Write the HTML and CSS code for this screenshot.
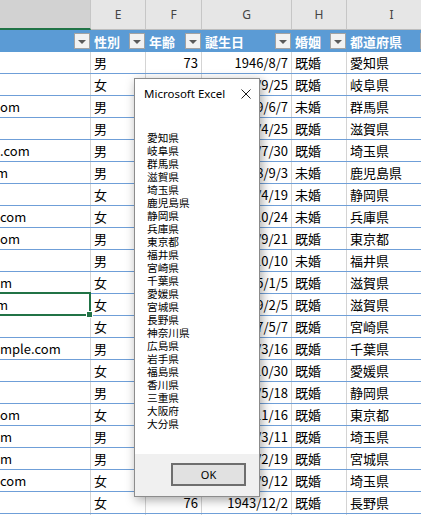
FILE: index.html
```html
<!DOCTYPE html>
<html lang="ja">
<head>
    <meta charset="UTF-8">
    <meta name="viewport" content="width=device-width, initial-scale=1.0">
    <title>会員リスト</title>
    <link rel="stylesheet" href="styles.css">
</head>
<body>
    <div class="sheet">
        <!-- column letters -->
        <div class="row col-heads">
            <div class="ch active"></div>
            <div class="ch">E</div>
            <div class="ch">F</div>
            <div class="ch">G</div>
            <div class="ch">H</div>
            <div class="ch">I</div>
        </div>

        <!-- table header with filter buttons -->
        <div class="row thead">
            <div class="th"><span></span><span class="filter"></span></div>
            <div class="th"><span>性別</span><span class="filter"></span></div>
            <div class="th"><span>年齢</span><span class="filter"></span></div>
            <div class="th"><span>誕生日</span><span class="filter"></span></div>
            <div class="th"><span>婚姻</span><span class="filter"></span></div>
            <div class="th"><span>都道府県</span><span class="filter"></span></div>
        </div>

        <div class="row"><div class="c mail"></div><div class="c">男</div><div class="c num">73</div><div class="c num">1946/8/7</div><div class="c">既婚</div><div class="c">愛知県</div></div>
        <div class="row"><div class="c mail"></div><div class="c">女</div><div class="c num">58</div><div class="c num">1961/9/25</div><div class="c">既婚</div><div class="c">岐阜県</div></div>
        <div class="row"><div class="c mail">om</div><div class="c">男</div><div class="c num">40</div><div class="c num">1979/6/7</div><div class="c">未婚</div><div class="c">群馬県</div></div>
        <div class="row"><div class="c mail"></div><div class="c">男</div><div class="c num">65</div><div class="c num">1954/4/25</div><div class="c">既婚</div><div class="c">滋賀県</div></div>
        <div class="row"><div class="c mail">.com</div><div class="c">男</div><div class="c num">48</div><div class="c num">1971/7/30</div><div class="c">既婚</div><div class="c">埼玉県</div></div>
        <div class="row"><div class="c mail cut">m</div><div class="c">男</div><div class="c num">31</div><div class="c num">1988/9/3</div><div class="c">未婚</div><div class="c">鹿児島県</div></div>
        <div class="row"><div class="c mail"></div><div class="c">女</div><div class="c num">27</div><div class="c num">1992/4/19</div><div class="c">未婚</div><div class="c">静岡県</div></div>
        <div class="row"><div class="c mail">com</div><div class="c">女</div><div class="c num">35</div><div class="c num">1984/10/24</div><div class="c">未婚</div><div class="c">兵庫県</div></div>
        <div class="row"><div class="c mail">om</div><div class="c">男</div><div class="c num">52</div><div class="c num">1967/9/21</div><div class="c">既婚</div><div class="c">東京都</div></div>
        <div class="row"><div class="c mail"></div><div class="c">男</div><div class="c num">29</div><div class="c num">1990/10/10</div><div class="c">未婚</div><div class="c">福井県</div></div>
        <div class="row"><div class="c mail">m</div><div class="c">女</div><div class="c num">44</div><div class="c num">1975/1/5</div><div class="c">既婚</div><div class="c">滋賀県</div></div>
        <div class="row"><div class="c mail cut">m</div><div class="c">女</div><div class="c num">50</div><div class="c num">1969/2/5</div><div class="c">既婚</div><div class="c">滋賀県</div></div>
        <div class="row"><div class="c mail"></div><div class="c">女</div><div class="c num">62</div><div class="c num">1957/5/7</div><div class="c">既婚</div><div class="c">宮崎県</div></div>
        <div class="row"><div class="c mail">mple.com</div><div class="c">男</div><div class="c num">56</div><div class="c num">1963/3/16</div><div class="c">既婚</div><div class="c">千葉県</div></div>
        <div class="row"><div class="c mail"></div><div class="c">女</div><div class="c num">38</div><div class="c num">1981/10/30</div><div class="c">既婚</div><div class="c">愛媛県</div></div>
        <div class="row"><div class="c mail"></div><div class="c">男</div><div class="c num">69</div><div class="c num">1950/5/18</div><div class="c">既婚</div><div class="c">静岡県</div></div>
        <div class="row"><div class="c mail">om</div><div class="c">女</div><div class="c num">41</div><div class="c num">1978/11/16</div><div class="c">既婚</div><div class="c">東京都</div></div>
        <div class="row"><div class="c mail">m</div><div class="c">男</div><div class="c num">47</div><div class="c num">1972/3/11</div><div class="c">既婚</div><div class="c">埼玉県</div></div>
        <div class="row"><div class="c mail">m</div><div class="c">男</div><div class="c num">53</div><div class="c num">1966/2/19</div><div class="c">既婚</div><div class="c">宮城県</div></div>
        <div class="row"><div class="c mail">com</div><div class="c">女</div><div class="c num">36</div><div class="c num">1983/9/12</div><div class="c">既婚</div><div class="c">埼玉県</div></div>
        <div class="row"><div class="c mail"></div><div class="c">女</div><div class="c num">76</div><div class="c num">1943/12/2</div><div class="c">既婚</div><div class="c">長野県</div></div>
        <div class="row"><div class="c mail"></div><div class="c"></div><div class="c"></div><div class="c"></div><div class="c"></div><div class="c"></div></div>

        <!-- active cell -->
        <div class="sel"><span class="handle"></span></div>
    </div>

    <!-- MsgBox -->
    <div class="msgbox">
        <div class="msgbox-title">
            <span>Microsoft Excel</span>
            <svg class="close" width="10" height="10" viewBox="0 0 10 10">
                <path d="M0.5 0.5L9.5 9.5M9.5 0.5L0.5 9.5" stroke="#1b1b1b" stroke-width="1" fill="none"/>
            </svg>
        </div>
        <p class="msgbox-text">愛知県<br>岐阜県<br>群馬県<br>滋賀県<br>埼玉県<br>鹿児島県<br>静岡県<br>兵庫県<br>東京都<br>福井県<br>宮崎県<br>千葉県<br>愛媛県<br>宮城県<br>長野県<br>神奈川県<br>広島県<br>岩手県<br>福島県<br>香川県<br>三重県<br>大阪府<br>大分県</p>
        <div class="msgbox-foot">
            <button class="btn-ok">OK</button>
        </div>
    </div>
</body>
</html>
```

FILE: styles.css
```css
body {
    margin: 0;
    background: #fff;
    font-family: "Noto Sans CJK JP", sans-serif;
    overflow: hidden;
}
.sheet {
    position: relative;
    width: 437px;
}
.row {
    display: grid;
    grid-template-columns: 91px 55px 56px 90px 55px 90px;
    height: 22px;
    box-sizing: border-box;
    border-bottom: 1px solid #6f9fd8;
}
.c {
    border-right: 1px solid #d4d4d4;
    padding: 0 3px;
    font-size: 13px;
    line-height: 21px;
    white-space: nowrap;
    overflow: hidden;
    color: #000;
}
.c.num {
    text-align: right;
}
.c.mail {
    padding-left: 0;
}
.c.cut {
    text-indent: -4px;
}

/* column letters */
.col-heads {
    height: 30px;
    border-bottom: none;
}
.ch {
    box-sizing: border-box;
    height: 30px;
    background: #e6e6e6;
    border-right: 1px solid #c6c6c6;
    border-bottom: 1px solid #bdbdbd;
    text-align: center;
    font: 12px/29px "Noto Sans", sans-serif;
    color: #444;
}
.ch.active {
    background: #d2d2d2;
    border-bottom: 2px solid #217346;
}

/* table header */
.thead {
    background: #5b9bd5;
    border-bottom: none;
}
.th {
    display: flex;
    align-items: center;
    justify-content: space-between;
    padding-left: 3px;
    border-right: 1px solid #5b9bd5;
    color: #fff;
    font-size: 13px;
    font-weight: bold;
    white-space: nowrap;
}
.filter {
    display: flex;
    align-items: center;
    justify-content: center;
    flex: none;
    width: 16px;
    height: 16px;
    box-sizing: border-box;
    background: #f2f2f2;
    border: 1px solid #a3a3a3;
}
.filter::after {
    content: "";
    border-left: 4px solid transparent;
    border-right: 4px solid transparent;
    border-top: 4px solid #5a5a5a;
    margin-top: 1px;
}

/* selected cell */
.sel {
    position: absolute;
    left: -3px;
    top: 292px;
    width: 94px;
    height: 24px;
    box-sizing: border-box;
    border: 2px solid #217346;
}
.handle {
    position: absolute;
    right: -4px;
    bottom: -4px;
    width: 5px;
    height: 5px;
    background: #217346;
    border: 1px solid #fff;
}

/* message box */
.msgbox {
    position: absolute;
    left: 134px;
    top: 78px;
    width: 126px;
    height: 419px;
    box-sizing: border-box;
    display: flex;
    flex-direction: column;
    background: #fff;
    border: 1px solid #8c8c8c;
    box-shadow: 2px 3px 10px rgba(0, 0, 0, 0.35);
    font-family: "Noto Sans", sans-serif;
}
.msgbox-title {
    height: 28px;
    display: flex;
    align-items: center;
    justify-content: space-between;
    padding: 0 8px 0 9px;
    font-size: 11.5px;
    color: #000;
}
.close {
    margin-top: 1px;
}
.msgbox-text {
    flex: 1;
    margin: 0;
    padding: 24px 0 0 12px;
    font: 10.67px/13px "Noto Sans CJK JP", sans-serif;
    color: #000;
}
.msgbox-foot {
    height: 42px;
    box-sizing: border-box;
    display: flex;
    justify-content: flex-end;
    align-items: flex-start;
    padding: 9px 13px 0 0;
    background: #f0f0f0;
}
.btn-ok {
    width: 75px;
    height: 23px;
    box-sizing: border-box;
    padding: 0;
    background: #e1e1e1;
    border: 2px solid #6e6e6e;
    font: 11px "Noto Sans", sans-serif;
    color: #000;
}
```
